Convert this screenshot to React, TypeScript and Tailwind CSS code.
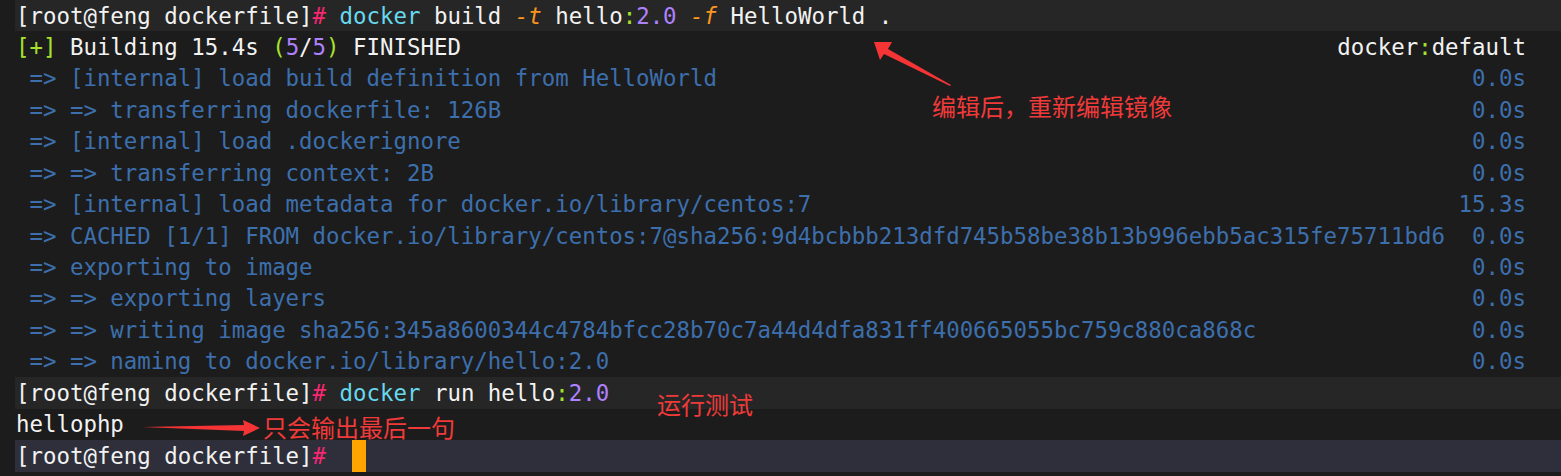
const mono = "font-['DejaVu_Sans_Mono','Liberation_Mono',monospace]";

const steps: [string, string][] = [
  ["=> [internal] load build definition from HelloWorld", "0.0s"],
  ["=> => transferring dockerfile: 126B", "0.0s"],
  ["=> [internal] load .dockerignore", "0.0s"],
  ["=> => transferring context: 2B", "0.0s"],
  ["=> [internal] load metadata for docker.io/library/centos:7", "15.3s"],
  ["=> CACHED [1/1] FROM docker.io/library/centos:7@sha256:9d4bcbbb213dfd745b58be38b13b996ebb5ac315fe75711bd6", "0.0s"],
  ["=> exporting to image", "0.0s"],
  ["=> => exporting layers", "0.0s"],
  ["=> => writing image sha256:345a8600344c4784bfcc28b70c7a44d4dfa831ff400665055bc759c880ca868c", "0.0s"],
  ["=> => naming to docker.io/library/hello:2.0", "0.0s"],
];

function Prompt() {
  return (
    <>
      <span>[root@feng dockerfile]</span>
      <span className="text-[#f92672]">#</span>
    </>
  );
}

function Line({ children, band }: { children: React.ReactNode; band?: string }) {
  return (
    <div className={`h-[31.45px] flex items-center justify-between pl-[1px] pr-[35px] whitespace-pre ${band ?? ""}`}>
      {children}
    </div>
  );
}

export default function App() {
  return (
    <div className={`relative w-[1561px] h-[476px] overflow-hidden bg-[#1c1c1c] pl-[15px] text-[22.4px] leading-none text-[#f2f2f2] ${mono}`}>
      <Line band="bg-[#262626]">
        <span>
          <Prompt /> <span className="text-[#66d9ef]">docker</span> build{" "}
          <span className="text-[#fd971f] italic">-t</span> hello<span className="text-[#a6e22e]">:</span>
          <span className="text-[#ae81ff]">2.0</span> <span className="text-[#fd971f] italic">-f</span> HelloWorld .
        </span>
      </Line>
      <Line>
        <span>
          <span className="text-[#a6e22e]">[+]</span> Building 15.4s <span className="text-[#a6e22e]">(</span>
          <span className="text-[#ae81ff]">5</span>/<span className="text-[#ae81ff]">5</span>
          <span className="text-[#a6e22e]">)</span> FINISHED
        </span>
        <span>
          docker<span className="text-[#a6e22e]">:</span>default
        </span>
      </Line>
      {steps.map(([text, time], i) => (
        <Line key={i}>
          <span className="text-[#3d6fad]"> {text}</span>
          <span className="text-[#3d6fad]">{time}</span>
        </Line>
      ))}
      <Line band="bg-[#262626]">
        <span>
          <Prompt /> <span className="text-[#66d9ef]">docker</span> run hello<span className="text-[#a6e22e]">:</span>
          <span className="text-[#ae81ff]">2.0</span>
        </span>
      </Line>
      <Line>
        <span>hellophp</span>
      </Line>
      <Line band="bg-[#2f2f3b]">
        <span className="flex items-center">
          <Prompt />
          <span className="ml-[26px] w-[14px] h-[31.45px] bg-[#ffa500]" />
        </span>
      </Line>

      {/* annotations */}
      <svg className="absolute left-0 top-0 pointer-events-none" width="1561" height="476">
        <polygon points="874,42 892,42 888,49 951,85 950,86 884,54 880,60" fill="#f53535" />
        <polygon points="142,427 244,425 243,420 260,428 243,436 244,431" fill="#f53535" />
      </svg>
      <div className="absolute left-[932px] top-[94px] text-[24px] leading-none text-[#f03a3a] font-['Noto_Sans_CJK_SC',sans-serif]">
        编辑后，重新编辑镜像
      </div>
      <div className="absolute left-[657px] top-[392px] text-[24px] leading-none text-[#f03a3a] font-['Noto_Sans_CJK_SC',sans-serif]">
        运行测试
      </div>
      <div className="absolute left-[263px] top-[415px] text-[24px] leading-none text-[#f03a3a] font-['Noto_Sans_CJK_SC',sans-serif]">
        只会输出最后一句
      </div>
    </div>
  );
}
